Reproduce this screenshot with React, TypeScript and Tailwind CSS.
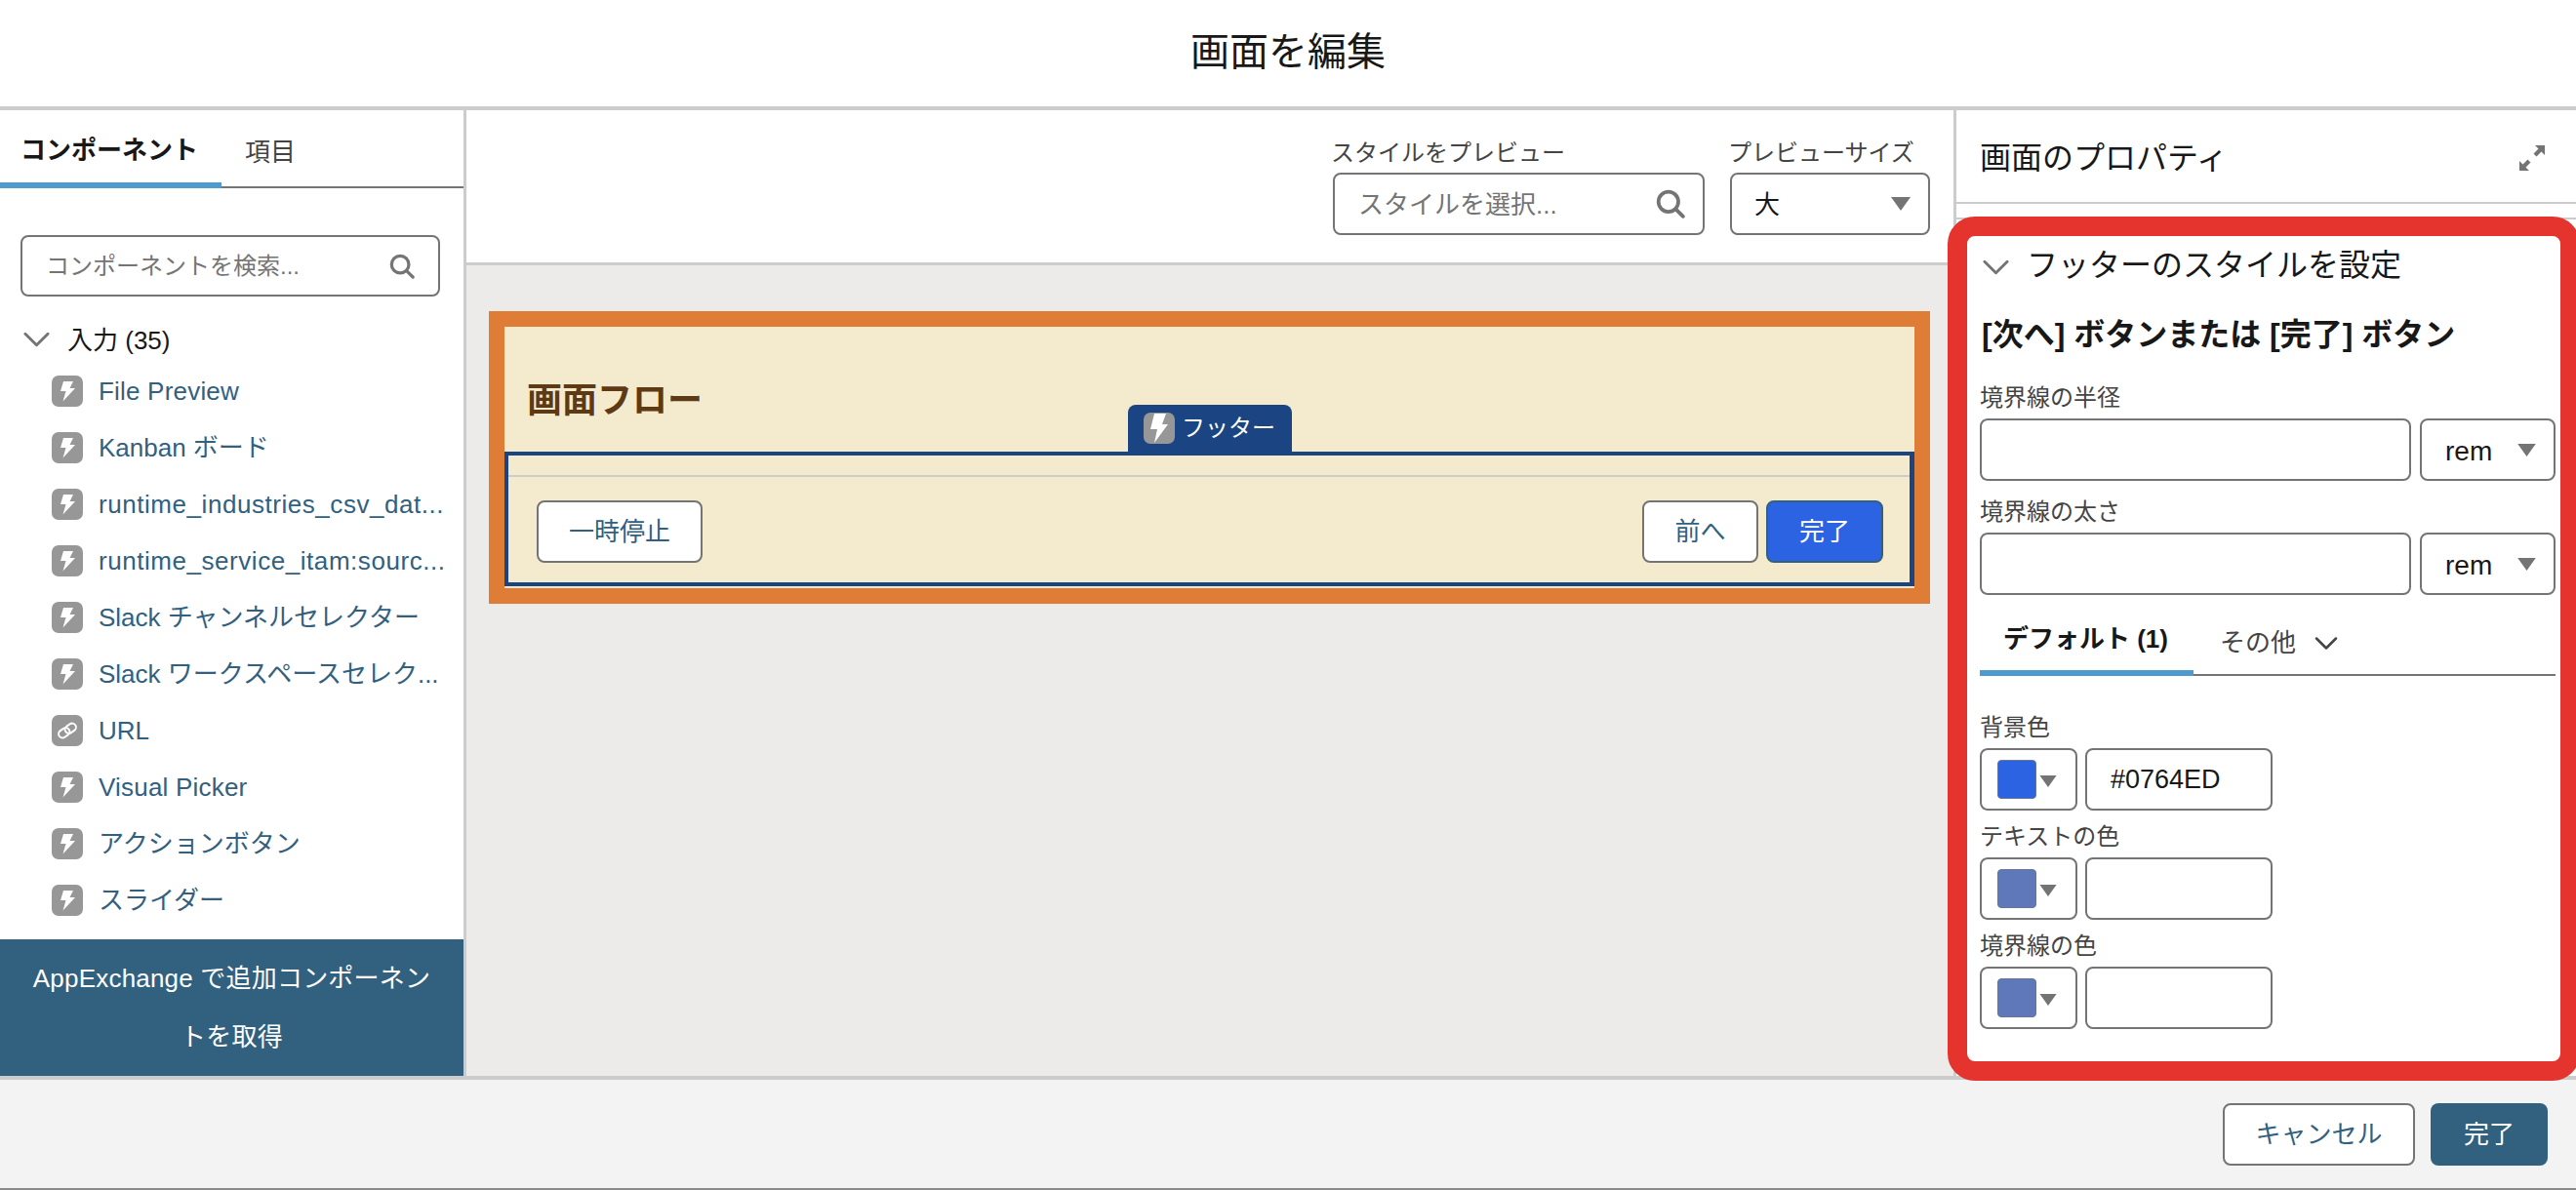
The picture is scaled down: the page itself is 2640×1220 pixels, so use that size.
import type { ReactNode } from "react";

const items = [
  { name: "File Preview", tracking: "tracking-[0.2px]" },
  { name: "Kanban ボード", tracking: "tracking-normal" },
  { name: "runtime_industries_csv_dat...", tracking: "tracking-[0.55px]" },
  { name: "runtime_service_itam:sourc...", tracking: "tracking-[0.55px]" },
  { name: "Slack チャンネルセレクター", tracking: "tracking-normal" },
  { name: "Slack ワークスペースセレク...", tracking: "tracking-normal" },
  { name: "URL", tracking: "tracking-normal", link: true },
  { name: "Visual Picker", tracking: "tracking-[0.2px]" },
  { name: "アクションボタン", tracking: "tracking-normal" },
  { name: "スライダー", tracking: "tracking-normal" },
];

const Chevron = ({ className }: { className: string }) => (
  <svg viewBox="0 0 28 18" fill="none" className={className}>
    <path d="M2 3l12 12L26 3" stroke="currentColor" strokeWidth="3" strokeLinecap="round" strokeLinejoin="round" />
  </svg>
);

const SearchIcon = ({ className }: { className: string }) => (
  <svg viewBox="0 0 28 28" fill="none" className={className}>
    <circle cx="12" cy="12" r="9.5" stroke="#747474" strokeWidth="3.5" />
    <path d="M19 19l7 7" stroke="#747474" strokeWidth="3.5" strokeLinecap="round" />
  </svg>
);

const BoltIcon = () => (
  <svg viewBox="0 0 32 32" className="h-8 w-8 shrink-0">
    <rect width="32" height="32" rx="7" fill="#979797" />
    <path d="M12 6h10l-3.5 7H24L11.5 26.5l3-10.5H9z" fill="#fff" />
  </svg>
);

const LargeBoltIcon = () => (
  <svg viewBox="0 0 32 32" className="h-8 w-8 shrink-0">
    <rect width="32" height="32" rx="7" fill="#979797" />
    <path d="M11 1h12l-4 11h6L11 31l3-14H7z" fill="#fff" />
  </svg>
);

const LinkIcon = () => (
  <svg viewBox="0 0 32 32" className="h-8 w-8 shrink-0">
    <rect width="32" height="32" rx="7" fill="#979797" />
    <g fill="none" stroke="#fff" strokeWidth="2" transform="rotate(-35 16 16)">
      <rect x="6" y="12" width="12" height="8" rx="4" />
      <rect x="14" y="12" width="12" height="8" rx="4" />
    </g>
  </svg>
);

const Caret = ({ className }: { className: string }) => (
  <svg viewBox="0 0 20 14" className={className}>
    <path d="M0 0h20L10 14z" fill="#747474" />
  </svg>
);

const Label = ({ children, className = "" }: { children: ReactNode; className?: string }) => (
  <div className={`h-[30px] pt-px text-[24px] leading-[30px] text-[#444444] ${className}`}>{children}</div>
);

const OutlineButton = ({ children, className }: { children: ReactNode; className: string }) => (
  <div className={`flex h-16 items-center justify-center rounded-lg border-2 border-[#747474] bg-white text-[26px] text-[#32607f] ${className}`}>
    {children}
  </div>
);

const SizeField = ({ label, className }: { label: string; className: string }) => (
  <div className={className}>
    <Label>{label}</Label>
    <div className="mt-[7px] flex gap-[9px]">
      <div className="h-16 w-[442px] rounded-lg border-2 border-[#747474] bg-white" />
      <div className="flex h-16 w-[139px] items-center rounded-lg border-2 border-[#747474] bg-white pl-6 pr-[18px]">
        <span className="flex-1 pt-[3px] text-[28px] text-[#181818]">rem</span>
        <Caret className="h-[13px] w-[19px]" />
      </div>
    </div>
  </div>
);

const ColorField = ({ label, value, swatch, className }: { label: string; value?: string; swatch: string; className: string }) => (
  <div className={className}>
    <Label>{label}</Label>
    <div className="mt-[7px] flex gap-2">
      <div className="flex h-16 w-[100px] items-center rounded-lg border-2 border-[#747474] bg-white pl-4">
        <div className={`h-10 w-10 rounded border border-[#667799] ${swatch}`} />
        <Caret className="ml-[3px] mt-[3px] h-[12px] w-[18px]" />
      </div>
      <div className="flex h-16 w-[192px] items-center rounded-lg border-2 border-[#747474] bg-white pl-6 text-[27px] text-[#181818]">
        {value}
      </div>
    </div>
  </div>
);

export default function App() {
  return (
    <div className="relative flex h-[1220px] w-[2640px] flex-col overflow-hidden bg-white [font-family:'Liberation_Sans','Noto_Sans_CJK_JP',sans-serif]">
      <header className="flex h-[113px] shrink-0 items-center justify-center border-b-4 border-[#cccccc] pb-1 text-[40px] text-[#181818]">
        画面を編集
      </header>

      <div className="flex h-[990px] shrink-0">
        {/* component palette */}
        <aside className="flex w-[478px] shrink-0 flex-col border-r-[3px] border-[#cccccc]">
          <div className="flex h-20 shrink-0 border-b-2 border-[#747474] text-[26px]">
            <div className="-mb-0.5 flex w-[227px] items-center border-b-[6px] border-[#4f9bd0] pl-[21px] pt-2 font-bold text-[#181818]">
              コンポーネント
            </div>
            <div className="ml-6 flex items-center pt-2 text-[#444444]">項目</div>
          </div>
          <div className="mx-[21px] mt-12 flex h-[63px] w-[430px] shrink-0 items-center rounded-lg border-2 border-[#747474] pl-6 pr-6">
            <span className="flex-1 text-[24px] text-[#747474]">コンポーネントを検索...</span>
            <SearchIcon className="h-[26px] w-[26px]" />
          </div>
          <div className="mt-6 flex h-10 shrink-0 items-center pl-6 text-[26px] text-[#181818]">
            <Chevron className="h-[18px] w-[27px] text-[#747474]" />
            <span className="ml-[18px] pt-0.5">入力 (35)</span>
          </div>
          <ul className="mt-1">
            {items.map((item) => (
              <li key={item.name} className={`flex h-[58px] items-center gap-4 pl-[53px] text-[26px] whitespace-nowrap text-[#32607f] ${item.tracking}`}>
                {item.link ? <LinkIcon /> : <BoltIcon />}
                {item.name}
              </li>
            ))}
          </ul>
          <div className="mt-auto h-[140px] bg-[#32607f] px-[30px] py-2.5 text-center text-[26px] tracking-[0.2px] leading-[60px] text-white">
            AppExchange で追加コンポーネントを取得
          </div>
        </aside>

        {/* preview */}
        <main className="flex w-[1524px] shrink-0 flex-col bg-[#ecebe9]">
          <div className="flex h-[159px] shrink-0 justify-end gap-[26px] border-b-[3px] border-[#cccccc] bg-white pr-6 pt-7">
            <div>
              <Label className="-ml-0.5">スタイルをプレビュー</Label>
              <div className="mt-1.5 flex h-16 w-[381px] items-center rounded-lg border-2 border-[#747474] pl-6 pr-[18px]">
                <span className="flex-1 pt-0.5 text-[26px] text-[#747474]">スタイルを選択...</span>
                <SearchIcon className="h-[30px] w-[30px]" />
              </div>
            </div>
            <div>
              <Label className="-ml-0.5">プレビューサイズ</Label>
              <div className="mt-1.5 flex h-16 w-[205px] items-center rounded-lg border-2 border-[#747474] pl-[23px] pr-[18px]">
                <span className="flex-1 pt-0.5 text-[26px] text-[#181818]">大</span>
                <Caret className="h-[14px] w-5" />
              </div>
            </div>
          </div>

          <div className="ml-[23px] mr-6 mt-[47px] border-16 border-[#df7d36] bg-white">
            <div className="bg-[#f4ebcf] pb-[2px]">
              <div className="flex h-[128px] items-end pb-8 pl-[23px] text-[36px] leading-[40px] font-bold text-[#5d3a14]">
                画面フロー
              </div>
              <div className="relative border-4 border-r-[5px] border-[#1b4582] pt-5">
                <div className="absolute bottom-[calc(100%+4px)] left-[635px] flex h-[48px] w-[168px] items-center gap-[7px] rounded-t-lg bg-[#1b4582] pl-4 text-[24px] text-white">
                  <LargeBoltIcon />
                  フッター
                </div>
                <div className="h-0.5 bg-[#cccccc]" />
                <div className="flex items-center pb-5 pl-[29px] pr-[27px] pt-6">
                  <OutlineButton className="w-[170px]">一時停止</OutlineButton>
                  <OutlineButton className="ml-auto w-[119px]">前へ</OutlineButton>
                  <div className="ml-2 flex h-16 w-[120px] items-center justify-center rounded-lg border-2 border-[#32607f] bg-[#2b63e3] text-[26px] text-white">
                    完了
                  </div>
                </div>
              </div>
            </div>
          </div>
        </main>

        {/* properties */}
        <aside className="w-[638px] shrink-0 border-l-[3px] border-[#cccccc]">
          <div className="flex h-[96px] items-center border-b-2 border-[#cccccc] pl-6 pr-[32px] pt-1 text-[32px] text-[#181818]">
            <span className="flex-1">画面のプロパティ</span>
            <svg viewBox="0 0 26 26" className="h-[26px] w-[26px]">
              <path d="M16 0h10v10l-3.5-3.5-5 5-3-3 5-5zM0 16l3.5 3.5 5-5 3 3-5 5L10 26H0z" fill="#747474" />
            </svg>
          </div>
          <div className="mt-[14px] border-t-2 border-[#cccccc] pl-6 pr-[21px] pt-[27px]">
            <div className="flex h-10 items-center pl-[3px] text-[32px] text-[#181818]">
              <Chevron className="mt-1 h-[18px] w-[27px] text-[#747474]" />
              <span className="ml-[18px]">フッターのスタイルを設定</span>
            </div>
            <div className="mt-[31px] h-10 pl-[2px] text-[32px] leading-10 font-bold text-[#181818]">
              [次へ] ボタンまたは [完了] ボタン
            </div>
            <SizeField label="境界線の半径" className="mt-[29px]" />
            <SizeField label="境界線の太さ" className="mt-4" />

            <div className="mt-[15px] flex h-[68px] border-b-2 border-[#747474] text-[26px]">
              <div className="-mb-0.5 flex w-[219px] items-center justify-center border-b-[6px] border-[#4f9bd0] pb-0.5 pr-0.5 font-bold text-[#181818]">
                デフォルト (1)
              </div>
              <div className="ml-[27px] flex items-center gap-[19px] pt-0.5 text-[#444444]">
                その他
                <Chevron className="h-[15px] w-6 text-[#444444]" />
              </div>
            </div>

            <ColorField label="背景色" value="#0764ED" swatch="bg-[#2b63e3]" className="mt-[37px]" />
            <ColorField label="テキストの色" swatch="bg-[#5f78b9]" className="mt-[11px]" />
            <ColorField label="境界線の色" swatch="bg-[#5f78b9]" className="mt-[11px]" />
          </div>
        </aside>
      </div>

      <footer className="flex flex-1 justify-end gap-4 border-t-4 border-b-2 border-t-[#cccccc] border-b-[#8a8a8a] bg-[#f3f3f3] pr-[29px] pt-6">
        <OutlineButton className="w-[197px]">キャンセル</OutlineButton>
        <div className="flex h-16 w-[120px] items-center justify-center rounded-lg bg-[#32607f] text-[26px] text-white">完了</div>
      </footer>

      {/* red annotation frame drawn over the screenshot */}
      <div className="pointer-events-none absolute left-[1996px] top-[222px] h-[886px] w-[648px] rounded-[28px] border-20 border-[#e5332e]" />
    </div>
  );
}
